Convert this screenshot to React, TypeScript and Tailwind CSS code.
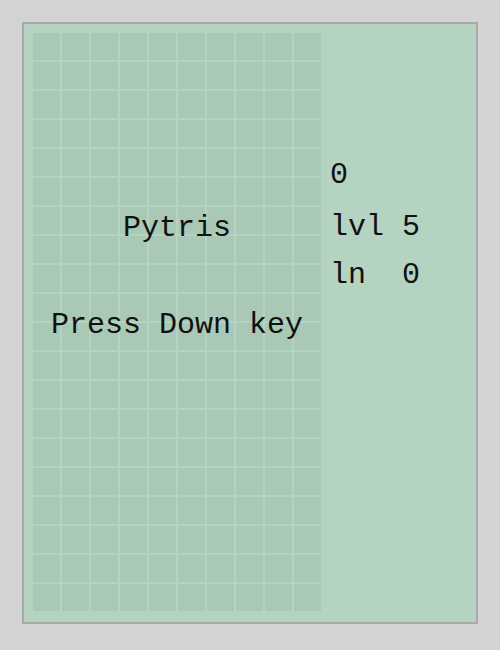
const cells = Array.from({ length: 200 }, (_, i) => i)

export default function App() {
  return (
    <div className="h-[650px] w-[500px] bg-[#d3d3d3] p-[22px] font-['Liberation_Mono',monospace] text-[30px] leading-[50px] text-[#111]">
      <div className="flex h-[602px] w-[456px] border-2 border-[#a9a9a9] bg-[#b4d3c0] pl-[9px] pt-[9px]">
        <div className="relative h-[578px] w-[288px]">
          <div className="grid grid-cols-[repeat(10,27px)] grid-rows-[repeat(20,27px)] gap-[2px]">
            {cells.map(i => (
              <div key={i} className="bg-[#a9c8b5]" />
            ))}
          </div>
          <div className="absolute inset-x-0 top-[170px] flex flex-col items-center whitespace-pre">
            <span>Pytris</span>
            <span className="h-[47px]"> </span>
            <span>Press Down key</span>
          </div>
        </div>
        <div className="ml-[9px] mt-[117px] flex flex-col whitespace-pre">
          <span>0</span>
          <span className="mt-[2px]">lvl 5</span>
          <span className="-mt-[2px]">ln  0</span>
        </div>
      </div>
    </div>
  )
}
